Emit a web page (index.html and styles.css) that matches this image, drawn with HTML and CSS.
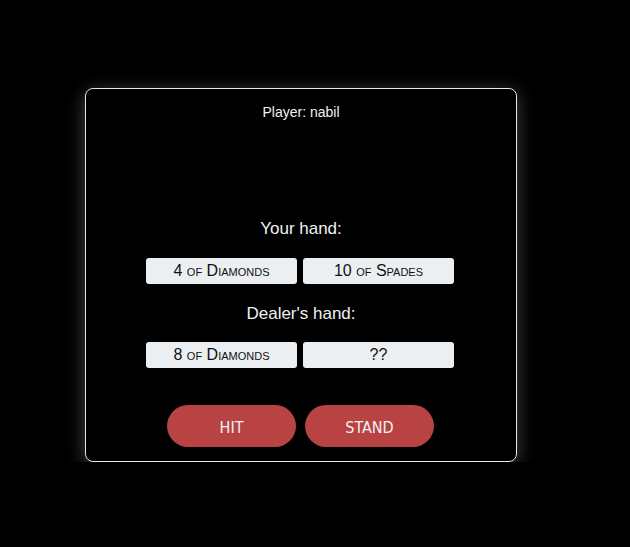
FILE: index.html
```html
<!DOCTYPE html>
<html>
<head>
<meta charset="utf-8">
<link rel="stylesheet" href="styles.css">
</head>
<body>
<div class="game">
  <div class="player">Player: nabil</div>
  <div class="label first">Your hand:</div>
  <div class="hand">
    <div class="card">4 of Diamonds</div>
    <div class="card">10 of Spades</div>
  </div>
  <div class="label">Dealer's hand:</div>
  <div class="hand dealer">
    <div class="card">8 of Diamonds</div>
    <div class="card">??</div>
  </div>
  <div class="actions">
    <button class="btn">HIT</button>
    <button class="btn">STAND</button>
  </div>
</div>
</body>
</html>
```
FILE: styles.css
```css
html, body {
  margin: 0;
  background: #000;
}
body {
  padding: 88px 0 0 85px;
  font-family: "Liberation Sans", Arial, sans-serif;
  color: #f0f0f0;
}
.game {
  box-sizing: border-box;
  width: 432px;
  height: 374px;
  border: 1px solid #e6e6e6;
  border-radius: 8px;
  box-shadow: 0 4px 18px rgba(255, 255, 255, 0.28);
  padding: 15px 0 0;
  display: flex;
  flex-direction: column;
  align-items: center;
}
.player {
  font-size: 14px;
  line-height: 16px;
}
.label {
  font-size: 17px;
  line-height: 20px;
  margin-top: 20px;
}
.label.first {
  margin-top: 99px;
}
.hand {
  display: flex;
  gap: 6px;
  margin: 19px 2px 0 0;
}
.hand.dealer {
  margin-top: 18px;
}
.card {
  width: 151px;
  height: 26px;
  background: #eceff1;
  color: #111;
  border-radius: 3px;
  font-size: 16px;
  font-variant: small-caps;
  line-height: 26px;
  text-align: center;
}
.actions {
  display: flex;
  gap: 9px;
  margin: 37px 1px 0 0;
}
.btn {
  width: 129px;
  height: 42px;
  border: none;
  border-radius: 21px;
  background: #b94343;
  color: #f2f2f2;
  font-family: "DejaVu Sans", sans-serif;
  font-stretch: condensed;
  font-size: 16px;
  padding: 3px 0 0;
  cursor: pointer;
}
```
